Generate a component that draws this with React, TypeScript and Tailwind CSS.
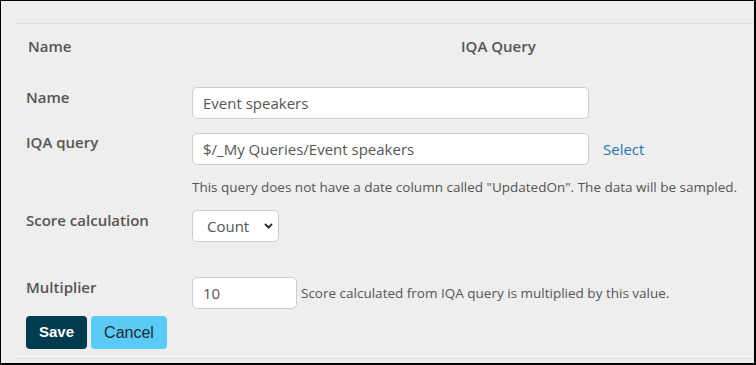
import React from "react";

export default function App() {
  return (
    <div className="w-[756px] h-[365px] bg-[#eeeeee] border-t border-l border-r-2 border-b-2 border-black font-['Open_Sans',sans-serif] text-[#555555]">
      <div className="ml-[15px] mt-[22px] h-[336px] border-t border-b border-[#dedede] flex flex-col">
        <div className="mt-[12px] grid grid-cols-[445px_1fr] text-[15px] leading-[20px] font-semibold">
          <div className="pl-[12px]">Name</div>
          <div>IQA Query</div>
        </div>

        <div className="mt-[31px] flex items-start">
          <label className="w-[176px] pl-[10px] text-[15px] leading-[20px] font-semibold">Name</label>
          <input
            readOnly
            value="Event speakers"
            className="w-[397px] h-[32px] bg-white border border-[#cccccc] rounded-[5px] px-[10px] text-[15px] text-[#555555] outline-none"
          />
        </div>

        <div className="mt-[14px] flex items-start">
          <label className="w-[176px] pl-[10px] text-[15px] leading-[20px] font-semibold -mt-[1px]">IQA query</label>
          <input
            readOnly
            value="$/_My Queries/Event speakers"
            className="w-[397px] h-[32px] bg-white border border-[#cccccc] rounded-[5px] px-[10px] text-[15px] text-[#555555] outline-none"
          />
          <a className="ml-[14px] text-[15px] leading-[32px] text-[#1b78ab]">Select</a>
        </div>

        <div className="ml-[176px] mt-[12px] text-[13.5px] leading-[20px]">
          This query does not have a date column called "UpdatedOn". The data will be sampled.
        </div>

        <div className="mt-[13px] flex items-start">
          <label className="w-[176px] pl-[10px] text-[15px] leading-[20px] font-semibold">Score calculation</label>
          <div className="relative w-[87px] h-[32px] bg-white border border-[#cccccc] rounded-[5px] flex items-center">
            <span className="pl-[14px] text-[15px] text-[#555555]">Count</span>
            <svg className="absolute left-[71px] top-[12px]" width="9" height="6" viewBox="0 0 9 6">
              <path d="M1 1 L4.5 4.5 L8 1" fill="none" stroke="#333333" strokeWidth="2" />
            </svg>
          </div>
        </div>

        <div className="mt-[35px] flex items-start">
          <label className="w-[176px] pl-[10px] text-[15px] leading-[20px] font-semibold">Multiplier</label>
          <input
            readOnly
            value="10"
            className="w-[105px] h-[32px] bg-white border border-[#cccccc] rounded-[5px] px-[10px] text-[15px] text-[#555555] outline-none"
          />
          <span className="ml-[4px] text-[13.5px] leading-[32px]">
            Score calculated from IQA query is multiplied by this value.
          </span>
        </div>

        <div className="mt-[7px] ml-[10px] flex gap-[4px] font-['Liberation_Sans',Arial,sans-serif]">
          <button className="h-[33px] w-[61px] rounded-[4px] bg-[#003b4f] text-white text-[15px] font-bold">Save</button>
          <button className="h-[33px] w-[76px] rounded-[4px] bg-[#5bcaf7] text-[#1d2b33] text-[16px]">Cancel</button>
        </div>
      </div>
    </div>
  );
}
